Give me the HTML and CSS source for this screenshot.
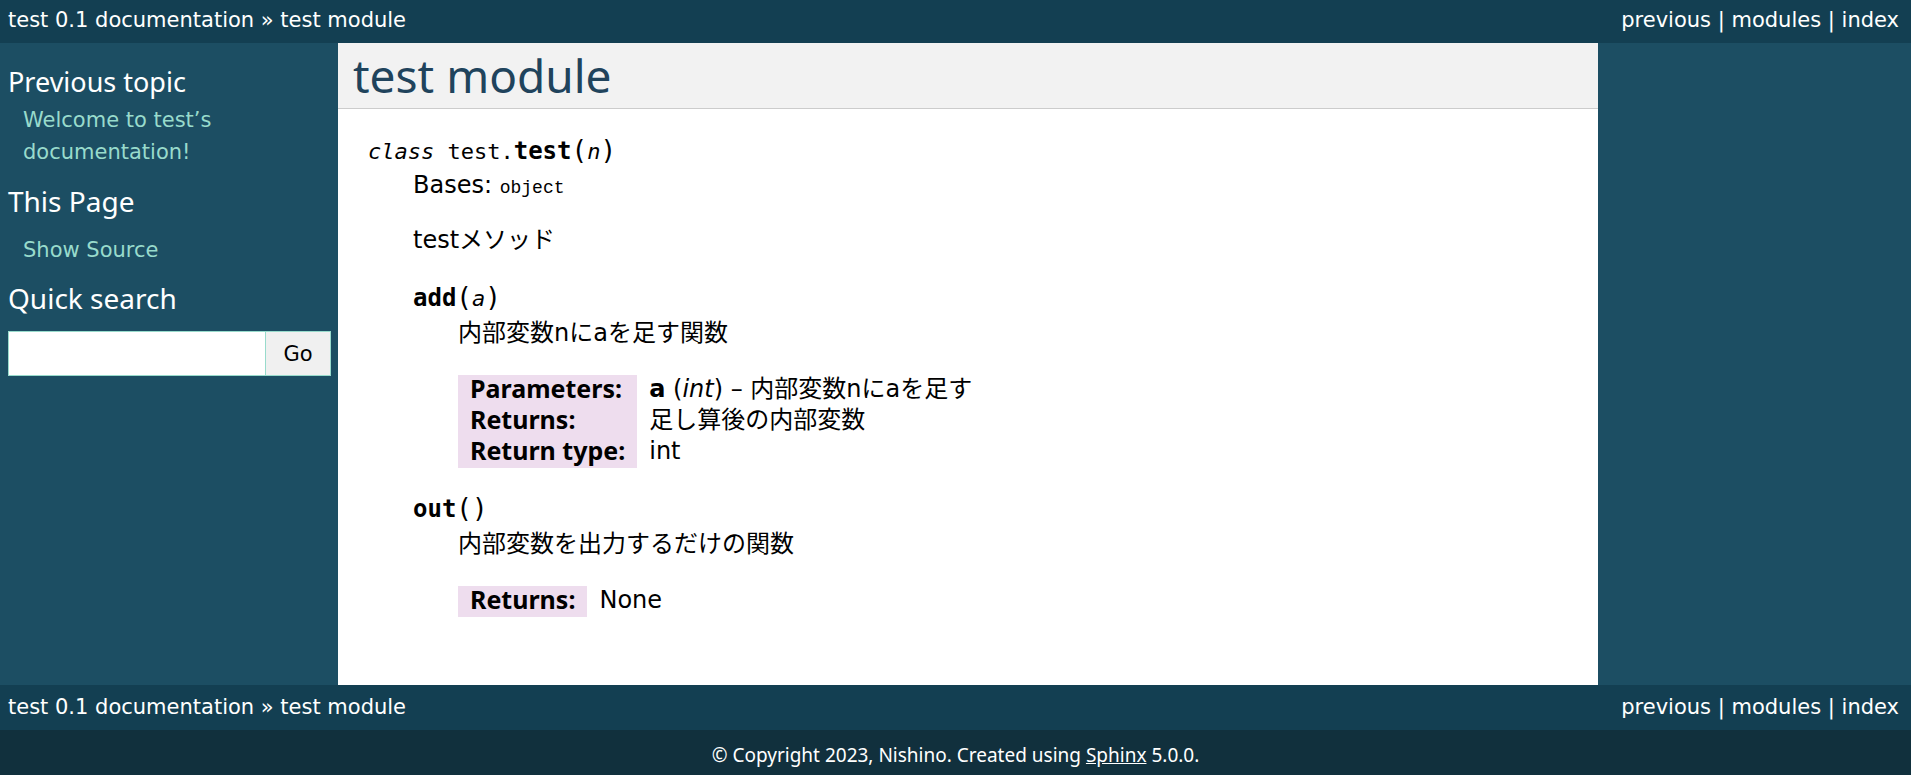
FILE: index.html
```html
<!DOCTYPE html>
<html lang="en">
<head>
<meta charset="utf-8">
<meta name="viewport" content="width=device-width, initial-scale=1">
<title>test module — test 0.1 documentation</title>
<link rel="stylesheet" href="styles.css">
</head>
<body>
<nav class="related">
  <div><a href="#">test 0.1 documentation</a> » <a href="#">test module</a></div>
  <div><a href="#">previous</a> | <a href="#">modules</a> | <a href="#">index</a></div>
</nav>
<div class="document">
  <aside class="sidebar">
    <h2 class="side-title side-title-small">Previous topic</h2>
    <p class="side-text side-topic"><a href="#">Welcome to test’s documentation!</a></p>
    <h2 class="side-title">This Page</h2>
    <p class="side-text side-source"><a href="#">Show Source</a></p>
    <h2 class="side-title" id="search-label">Quick search</h2>
    <form class="search">
      <input class="search-input" type="text" aria-labelledby="search-label">
      <button class="search-button" type="button">Go</button>
    </form>
  </aside>
  <main class="content">
    <h1 class="title">test module</h1>
    <dl class="api">
      <dt class="sig"><em>class</em> test.<b>test</b><span class="paren">(</span><em>n</em><span class="paren">)</span></dt>
      <dd class="desc">
        <p class="para">Bases: <code class="code">object</code></p>
        <p class="para">testメソッド</p>
        <dl class="method">
          <dt class="sig"><b>add</b><span class="paren">(</span><em>a</em><span class="paren">)</span></dt>
          <dd class="desc">
            <p class="para">内部変数nにaを足す関数</p>
            <table class="fields">
              <tr><th scope="row">Parameters:</th><td><b>a</b> (<i>int</i>) – 内部変数nにaを足す</td></tr>
              <tr><th scope="row">Returns:</th><td>足し算後の内部変数</td></tr>
              <tr><th scope="row">Return type:</th><td>int</td></tr>
            </table>
          </dd>
        </dl>
        <dl class="method">
          <dt class="sig"><b>out</b><span class="paren">(</span><span class="paren">)</span></dt>
          <dd class="desc">
            <p class="para">内部変数を出力するだけの関数</p>
            <table class="fields">
              <tr><th scope="row">Returns:</th><td>None</td></tr>
            </table>
          </dd>
        </dl>
      </dd>
    </dl>
  </main>
</div>
<nav class="related related-bottom">
  <div><a href="#">test 0.1 documentation</a> » <a href="#">test module</a></div>
  <div><a href="#">previous</a> | <a href="#">modules</a> | <a href="#">index</a></div>
</nav>
<footer class="footer">© Copyright 2023, Nishino. Created using <a href="#">Sphinx</a> 5.0.0.</footer>
</body>
</html>
```
FILE: styles.css
```css
* {
  box-sizing: border-box;
}

body {
  display: flex;
  flex-direction: column;
  min-height: 100vh;
  margin: 0;
  background: #11303d;
  color: #000;
  font-family: "DejaVu Sans", "Noto Sans CJK JP", sans-serif;
  font-size: 24px;
}

a {
  color: inherit;
  text-decoration: none;
}

.related {
  display: flex;
  justify-content: space-between;
  padding: 1px 12px 4px 8px;
  background: #133f52;
  color: #fff;
  font-size: 21px;
  line-height: 38px;
}

.related-bottom {
  padding-top: 3px;
}

.document {
  display: grid;
  grid-template-columns: 338px minmax(0, 1260px);
  flex: 1;
  background: #1c4e63;
}

.sidebar {
  padding: 20px 7px 0 8px;
}

.side-title {
  margin: 0;
  color: #fff;
  font-family: "Noto Sans", sans-serif;
  font-size: 28px;
  font-weight: 400;
  line-height: 38px;
}

.side-title-small {
  font-size: 27px;
}

.side-text {
  margin: 0 15px;
  color: #98dbcc;
  font-size: 21px;
  line-height: 32px;
}

.side-topic {
  padding: 3px 0 14px;
}

.side-source {
  padding: 14px 0 13px;
}

.search {
  display: flex;
  margin-top: 14px;
}

.search-input,
.search-button {
  height: 45px;
  border: 1px solid #98dbcc;
  border-radius: 0;
  font: inherit;
}

.search-input {
  flex: 1;
  min-width: 0;
  background: #fff;
}

.search-button {
  width: 65px;
  padding: 0;
  border-left: 0;
  background: #f0f0f0;
  color: #000;
  font-size: 21px;
}

.content {
  background: #fff;
}

.title {
  margin: 0;
  padding: 0 15px;
  border-bottom: 1px solid #ccc;
  background: #f2f2f2;
  color: #20435c;
  font-family: "Noto Sans", sans-serif;
  font-size: 46px;
  font-weight: 400;
  line-height: 65px;
}

.api {
  margin: 24px 30px 0;
}

.sig {
  font-family: "DejaVu Sans Mono", monospace;
  font-size: 22px;
  line-height: 36px;
}

.sig b {
  font-size: 24px;
}

.paren {
  font-size: 26px;
  line-height: 1;
}

.desc {
  margin: 0 0 0 45px;
}

.para {
  margin: 0 0 24px;
  line-height: 31px;
}

.code {
  font-family: "Liberation Mono", monospace;
  font-size: 18px;
  line-height: 1;
}

.method {
  margin: 0 0 23px;
}

.method .sig {
  line-height: 37px;
}

.method .desc {
  padding-top: 1px;
}

.method .para {
  margin-bottom: 26px;
}

.fields {
  border-collapse: collapse;
}

.fields th {
  padding: 0 12px 4px;
  background: #ede;
  font-family: "Noto Sans", sans-serif;
  font-size: 25px;
  font-weight: 700;
  line-height: 27px;
  text-align: left;
}

.fields td {
  padding: 0 0 2px 12px;
  line-height: 29px;
}

.footer {
  padding: 10px 8px 4px;
  color: #fff;
  font-family: "Noto Sans", sans-serif;
  font-size: 19px;
  line-height: 31px;
  text-align: center;
}

.footer a {
  text-decoration: underline;
}
```
